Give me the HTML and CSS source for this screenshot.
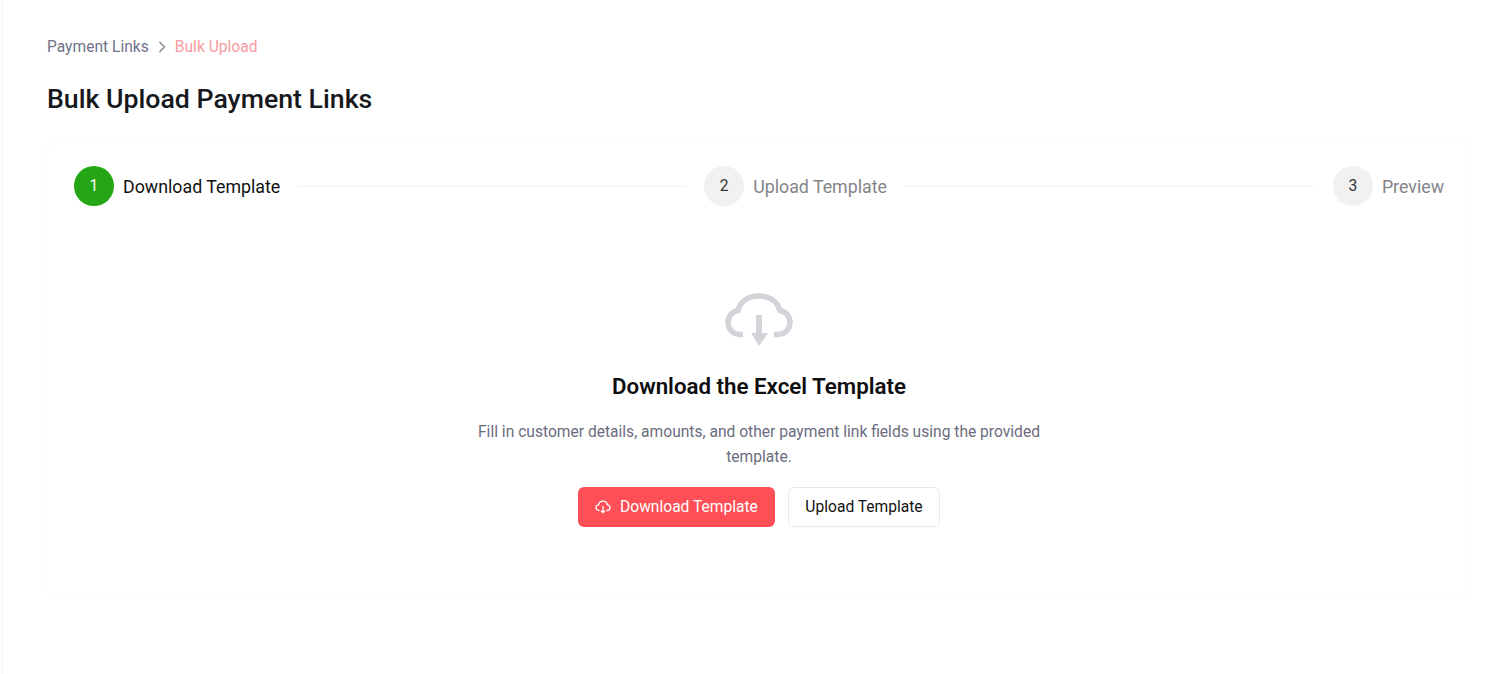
FILE: index.html
```html
<!DOCTYPE html>
<html lang="en">
<head>
    <meta charset="UTF-8">
    <meta name="viewport" content="width=device-width, initial-scale=1.0">
    <title>Bulk Upload Payment Links</title>
    <link rel="stylesheet" href="styles.css">
</head>
<body>
    <main class="page">
        <nav class="breadcrumb">
            <span>Payment Links</span>
            <svg class="breadcrumb-arrow" width="8" height="12" viewBox="0 0 8 12"><path d="M1.500 1l5 5-5 5" fill="none" stroke="#83838d" stroke-width="1.300"/></svg>
            <span class="breadcrumb-current">Bulk Upload</span>
        </nav>
        <h1>Bulk Upload Payment Links</h1>

        <section class="card">
            <div class="stepper">
                <div class="step step-active">
                    <span class="step-number">1</span>
                    <span class="step-label">Download Template</span>
                </div>
                <div class="step-line step-line-first"></div>
                <div class="step">
                    <span class="step-number">2</span>
                    <span class="step-label">Upload Template</span>
                </div>
                <div class="step-line step-line-second"></div>
                <div class="step">
                    <span class="step-number">3</span>
                    <span class="step-label">Preview</span>
                </div>
            </div>

            <div class="content">
                <svg class="cloud" width="68" height="54" viewBox="0 0 68 54">
                    <path d="M18 41.500H15C8 41.500 3 36 3 29.500C3 23 7.500 18.500 13 17.500C15 8 23.500 3 34 3C44.500 3 52.500 8 55 17.500C60.500 18.500 65 23 65 29.500C65 36 60 41.500 53 41.500H49" fill="none" stroke="#d2d4da" stroke-width="5.500"/>
                    <path d="M31 22h6v18h6L34 53 26 40h5z" fill="#d2d4da"/>
                </svg>
                <h2>Download the Excel Template</h2>
                <p>Fill in customer details, amounts, and other payment link fields using the provided template.</p>
                <div class="actions">
                    <button class="btn btn-primary" type="button">
                        <svg width="16" height="14" viewBox="0 0 16 14"><path d="M4.500 10.500H4C2.200 10.500 1 9.200 1 7.600C1 6 2.200 4.900 3.600 4.800C4.100 2.700 5.900 1.200 8 1.200C10.100 1.200 11.900 2.700 12.400 4.800C13.800 4.900 15 6 15 7.600C15 9.200 13.800 10.500 12 10.500H11.500M8 6v6.500M6 10.700l2 2 2-2" fill="none" stroke="#fff" stroke-width="1.300"/></svg>
                        Download Template
                    </button>
                    <button class="btn btn-secondary" type="button">Upload Template</button>
                </div>
            </div>
        </section>
    </main>
</body>
</html>
```

FILE: styles.css
```css
* {
    box-sizing: border-box;
}

body {
    margin: 0;
    height: 674px;
    overflow: hidden;
    font-family: Roboto, "Liberation Sans", sans-serif;
    background-color: #fff;
}

.page {
    height: 100%;
    margin-left: 2px;
    padding: 38px 29px 0 44px;
    border-left: 1px solid #f6f6f7;
}

.breadcrumb {
    display: flex;
    align-items: center;
    height: 18px;
    font-size: 15.600px;
    color: #6f7288;
}

.breadcrumb-arrow {
    margin: 0 9px;
}

.breadcrumb-current {
    color: #f79aa0;
}

h1 {
    margin: 25px 0 0;
    font-size: 26.700px;
    line-height: 36px;
    font-weight: 500;
    color: #16181c;
}

.card {
    height: 461px;
    margin-top: 21px;
    padding: 27px 26px 0;
    border: 1px solid #fbfbfb;
    border-radius: 12px;
}

.stepper {
    display: flex;
    align-items: center;
    height: 40px;
}

.step {
    display: flex;
    align-items: center;
    gap: 9px;
}

.step-number {
    display: flex;
    align-items: center;
    justify-content: center;
    width: 40px;
    height: 40px;
    border-radius: 50%;
    font-size: 15.600px;
    color: #333;
    background-color: #f1f1f2;
}

.step-label {
    font-size: 17.800px;
    color: #84848a;
}

.step-active .step-number {
    color: #fff;
    background-color: #25a616;
}

.step-active .step-label {
    color: #111;
}

.step-line {
    height: 1px;
    margin: 0 18px;
    background-color: #f2f2f3;
}

.step-line-first {
    flex: 388 1 0;
}

.step-line-second {
    flex: 410 1 0;
}

.content {
    display: flex;
    flex-direction: column;
    align-items: center;
    padding-top: 87px;
}

.cloud {
    display: block;
}

h2 {
    margin: 24px 0 0;
    font-size: 22.300px;
    line-height: 30px;
    font-weight: 600;
    color: #0e0e10;
}

.content p {
    width: 600px;
    margin: 19px 0 0;
    font-size: 15.600px;
    line-height: 25px;
    text-align: center;
    color: #6a6c7e;
}

.actions {
    display: flex;
    gap: 13px;
    margin-top: 17px;
}

.btn {
    display: flex;
    align-items: center;
    height: 40px;
    font-family: inherit;
    font-size: 15.600px;
    border-radius: 6px;
}

.btn-primary {
    gap: 9px;
    width: 197px;
    padding: 0 0 0 17px;
    color: #fff;
    background-color: #fd4f55;
    border: none;
}

.btn-secondary {
    justify-content: center;
    width: 152px;
    color: #111;
    background-color: #fff;
    border: 1px solid #e9e9ec;
}
```
